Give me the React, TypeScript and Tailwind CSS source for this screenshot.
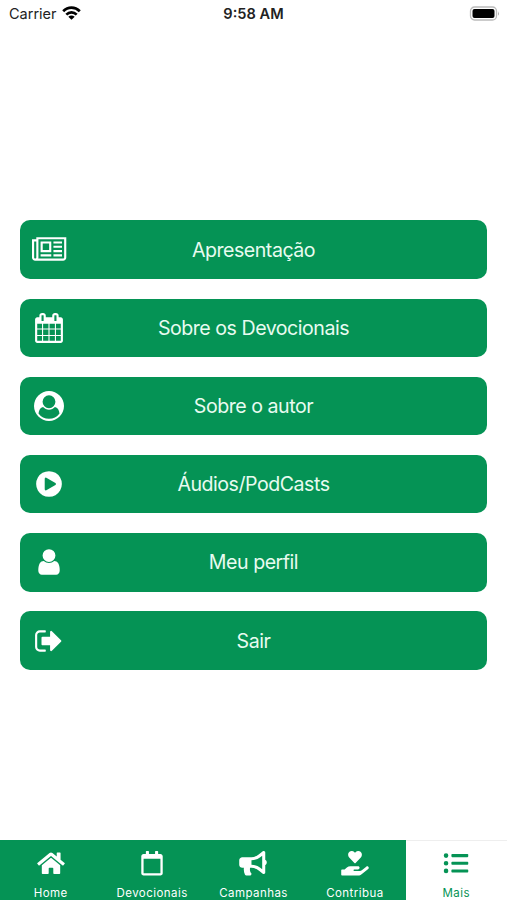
import React from 'react';
import { FaHome, FaRegCalendar, FaBullhorn, FaHandHoldingHeart, FaListUl } from 'react-icons/fa';

// Classic Font Awesome glyphs, drawn on a 1792 grid
const glyphs = {
  newspaper:
    'M1024 512h-384v384h384v-384zm128 640v128h-640v-128h640zm0-768v640h-640v-640h640zm640 768v128h-512v-128h512zm0-256v128h-512v-128h512zm0-256v128h-512v-128h512zm0-256v128h-512v-128h512zm-1536 960v-960h-128v960q0 26 19 45t45 19 45-19 19-45zm1664 0v-1088h-1536v1088q0 33-11 64h1483q26 0 45-19t19-45zm128-1216v1216q0 80-56 136t-136 56h-1664q-80 0-136-56t-56-136v-1088h256v-128h1792z',
  calendar:
    'M192 1664h288v-288h-288v288zm352 0h320v-288h-320v288zm-352-352h288v-320h-288v320zm352 0h320v-320h-320v320zm-352-384h288v-288h-288v288zm736 736h320v-288h-320v288zm-384-736h320v-288h-320v288zm768 736h288v-288h-288v288zm-384-352h320v-320h-320v320zm-352-864v-288q0-13-9.5-22.5t-22.5-9.5h-64q-13 0-22.5 9.5t-9.5 22.5v288q0 13 9.5 22.5t22.5 9.5h64q13 0 22.5-9.5t9.5-22.5zm736 864h288v-320h-288v320zm-384-384h320v-288h-320v288zm384 0h288v-288h-288v288zm32-480v-288q0-13-9.5-22.5t-22.5-9.5h-64q-13 0-22.5 9.5t-9.5 22.5v288q0 13 9.5 22.5t22.5 9.5h64q13 0 22.5-9.5t9.5-22.5zm384-64v1280q0 52-38 90t-90 38h-1408q-52 0-90-38t-38-90v-1280q0-52 38-90t90-38h128v-96q0-66 47-113t113-47h64q66 0 113 47t47 113v96h384v-96q0-66 47-113t113-47h64q66 0 113 47t47 113v96h128q52 0 90 38t38 90z',
  userCircle:
    'M1523 1339q-22-155-87.5-257.5t-184.5-118.5q-67 74-159.5 115.5t-195.5 41.5-195.5-41.5-159.5-115.5q-119 16-184.5 118.5t-87.5 257.5q106 150 271 237.5t356 87.5 356-87.5 271-237.5zm-243-699q0-159-112.5-271.5t-271.5-112.5-271.5 112.5-112.5 271.5 112.5 271.5 271.5 112.5 271.5-112.5 112.5-271.5zm512 256q0 182-71 347.5t-190.5 286-285.5 191.5-349 71q-182 0-348-71t-286-191-191-286-71-348 71-348 191-286 286-191 348-71 348 71 286 191 191 286 71 348z',
  play:
    'M896 128q209 0 385.5 103t279.5 279.5 103 385.5-103 385.5-279.5 279.5-385.5 103-385.5-103-279.5-279.5-103-385.5 103-385.5 279.5-279.5 385.5-103zm384 823q32-18 32-55t-32-55l-544-320q-31-19-64-1-32 19-32 56v640q0 37 32 56 16 8 32 8 17 0 32-9z',
  user:
    'M1536 1399q0 109-62.5 187t-150.5 78h-854q-88 0-150.5-78t-62.5-187q0-85 8.5-160.5t31.5-152 58.5-131 94-89 134.5-34.5q131 128 313 128t313-128q76 0 134.5 34.5t94 89 58.5 131 31.5 152 8.5 160.5zm-256-887q0 159-112.5 271.5t-271.5 112.5-271.5-112.5-112.5-271.5 112.5-271.5 271.5-112.5 271.5 112.5 112.5 271.5z',
  signOut:
    'M704 1440q0 4 1 20t.5 26.5-3 23.5-10 19.5-20.5 6.5h-320q-119 0-203.5-84.5t-84.5-203.5v-704q0-119 84.5-203.5t203.5-84.5h320q13 0 22.5 9.5t9.5 22.5q0 4 1 20t.5 26.5-3 23.5-10 19.5-20.5 6.5h-320q-66 0-113 47t-47 113v704q0 66 47 113t113 47h312l11.5 1 11.5 3 8 5.5 7 9 2 13.5zm928-544q0 26-19 45l-544 544q-19 19-45 19t-45-19-19-45v-288h-448q-26 0-45-19t-19-45v-384q0-26 19-45t45-19h448v-288q0-26 19-45t45-19 45 19l544 544q19 19 19 45z',
};

const menu = [
  { label: 'Apresentação', path: glyphs.newspaper, wide: true },
  { label: 'Sobre os Devocionais', path: glyphs.calendar },
  { label: 'Sobre o autor', path: glyphs.userCircle },
  { label: 'Áudios/PodCasts', path: glyphs.play },
  { label: 'Meu perfil', path: glyphs.user },
  { label: 'Sair', path: glyphs.signOut },
];

const tabs = [
  { label: 'Home', Icon: FaHome },
  { label: 'Devocionais', Icon: FaRegCalendar },
  { label: 'Campanhas', Icon: FaBullhorn },
  { label: 'Contribua', Icon: FaHandHoldingHeart },
  { label: 'Mais', Icon: FaListUl, active: true },
];

function StatusBar() {
  return (
    <header className="grid h-7 grid-cols-3 items-center pl-[9px] pr-[7px] text-[#222]">
      <div className="flex items-center gap-[5px] text-[14.5px]">
        <span>Carrier</span>
        <svg className="mb-0.5 h-[14px] w-[19px]" viewBox="0 0 19 14" fill="none" stroke="#000" strokeWidth="2.7">
          <path d="M1.2 5.2C6 .3 13 .3 17.8 5.2" />
          <path d="M4.3 8.6C7.3 5.7 11.7 5.7 14.7 8.6" />
          <path d="M9.5 13.8 6.3 10.7Q9.5 8.2 12.7 10.7Z" fill="#000" stroke="none" />
        </svg>
      </div>
      <span className="pr-[2px] pt-px text-center text-[14.6px] font-semibold">9:58 AM</span>
      <svg className="mb-0.5 h-[15px] w-[31px] justify-self-end" viewBox="0 0 31 15">
        <rect x="1.5" y="1" width="26" height="13" rx="4" fill="#fff" stroke="#bbb" strokeWidth="1.3" />
        <rect x="3.5" y="3" width="22" height="9" rx="2" fill="#000" />
        <path d="M29 5.2q1.8 2.3 0 4.6z" fill="#aaa" />
      </svg>
    </header>
  );
}

export default function App() {
  return (
    <div className="flex h-[900px] w-full flex-col overflow-hidden bg-white font-[Inter,sans-serif]">
      <StatusBar />

      {/* Menu buttons */}
      <main className="flex flex-1 flex-col gap-[19.7px] px-[20.4px] pt-[192.4px]">
        {menu.map(({ label, path, wide }) => (
          <button
            key={label}
            className="grid h-[58.5px] w-full shrink-0 grid-cols-[58px_1fr_58px] items-center rounded-[10px] bg-[#059355] text-[19.6px] text-[#e8fbf0]"
          >
            <svg
              className={wide ? 'h-[30px] w-[34.3px] justify-self-center' : 'h-[30px] w-[30px] justify-self-center'}
              viewBox={wide ? '0 0 2048 1792' : '0 0 1792 1792'}
              fill="#fff"
            >
              <path d={path} />
            </svg>
            <span className="pt-[1.5px] text-center tracking-[-0.48px]">{label}</span>
          </button>
        ))}
      </main>

      {/* Bottom tabs */}
      <nav className="grid h-[59.6px] shrink-0 grid-cols-5">
        {tabs.map(({ label, Icon, active }) => (
          <button
            key={label}
            className={
              active
                ? 'flex flex-col items-center border-t border-[#eee] bg-white pt-[9.6px] text-[#059355]'
                : 'flex flex-col items-center bg-[#059355] pt-[10.6px] text-white'
            }
          >
            <Icon className="h-[24.5px] w-[28px]" />
            <span className="mt-[9.4px] text-[11.5px] leading-[16px] tracking-[0.45px]">{label}</span>
          </button>
        ))}
      </nav>
    </div>
  );
}
